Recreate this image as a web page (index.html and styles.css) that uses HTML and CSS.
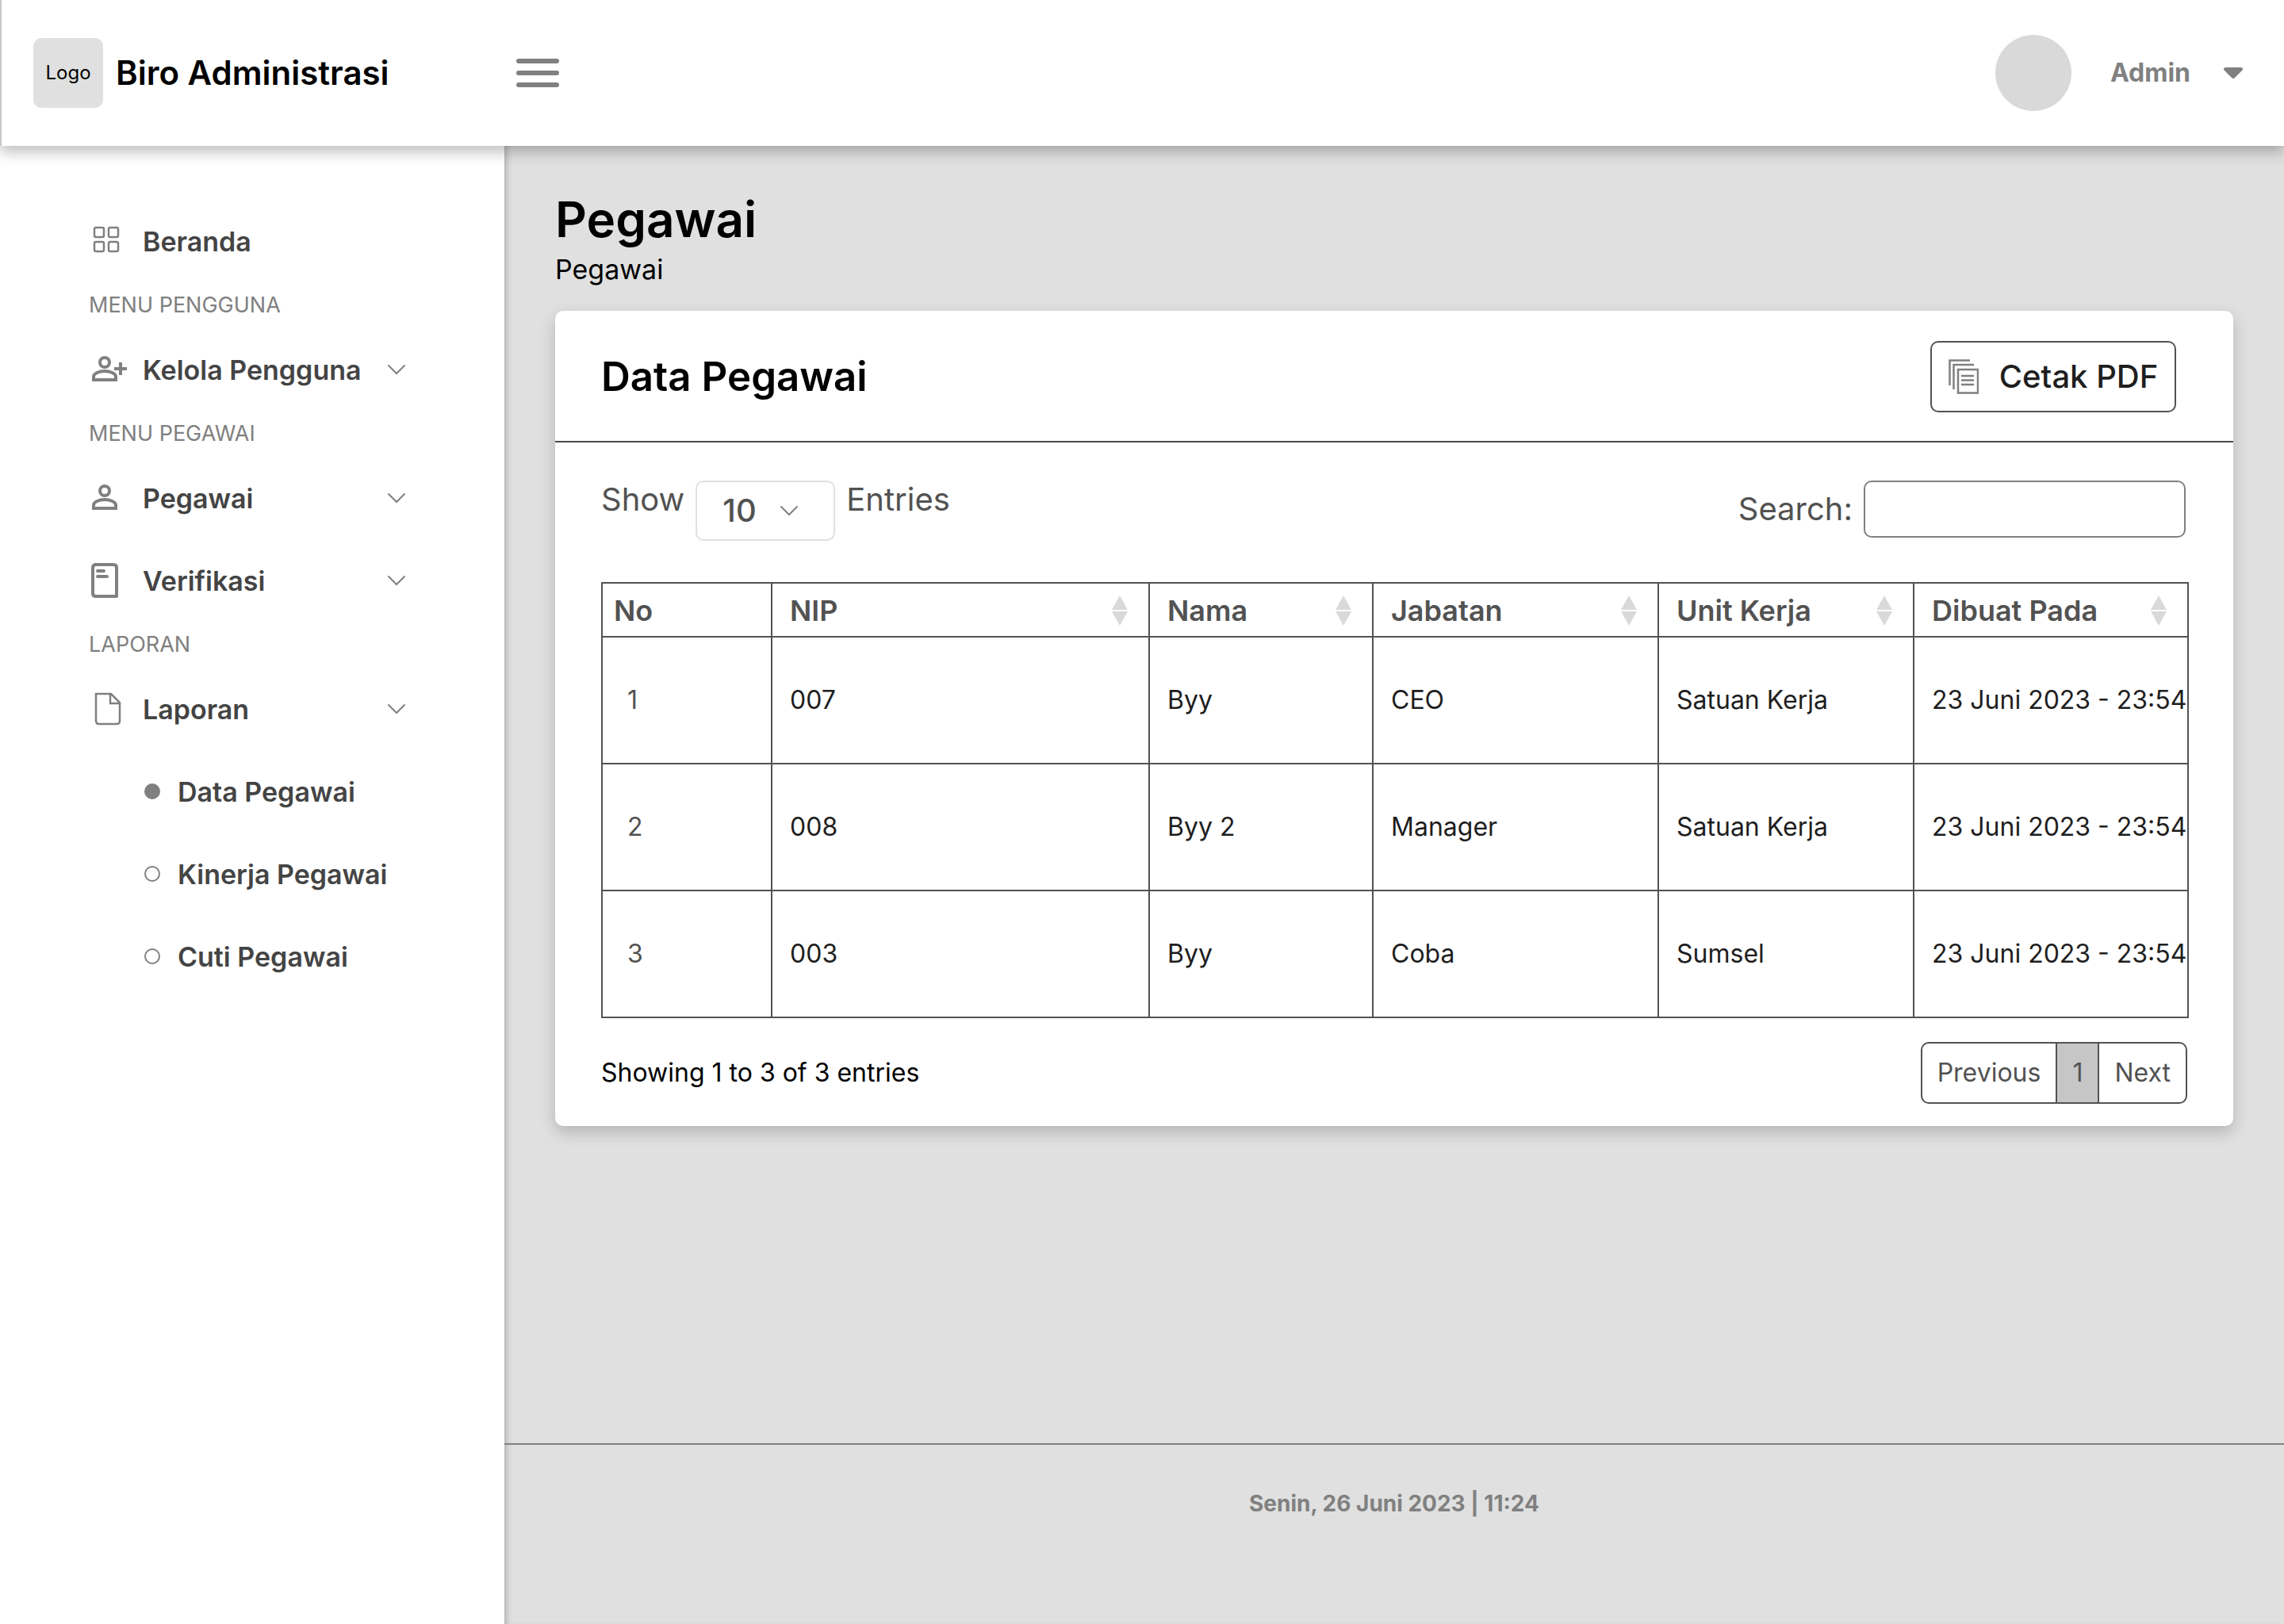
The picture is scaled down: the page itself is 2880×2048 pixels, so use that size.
FILE: index.html
```html
<!DOCTYPE html>
<html lang="id">
<head>
<meta charset="utf-8">
<meta name="viewport" content="width=device-width, initial-scale=1">
<title>Biro Administrasi - Data Pegawai</title>
<link rel="stylesheet" href="styles.css">
</head>
<body>
<svg class="defs" aria-hidden="true">
  <symbol id="chevron" viewBox="0 0 24 14"><path d="M2 2l10 10L22 2" fill="none" stroke="currentColor" stroke-width="2" stroke-linecap="round"/></symbol>
  <symbol id="sort" viewBox="0 0 20 38"><path d="M10 0l10 18H0zM0 20h20L10 38z" fill="currentColor"/></symbol>
</svg>

<header class="topbar">
  <a class="brand" href="#"><span class="brand-logo">Logo</span><span class="brand-name">Biro Administrasi</span></a>
  <button class="menu-toggle" type="button" aria-label="Menu">
    <svg width="54" height="36" viewBox="0 0 54 36"><path d="M3 3h48M3 18h48M3 33h48" stroke="currentColor" stroke-width="6" stroke-linecap="round"/></svg>
  </button>
  <button class="account" type="button">
    <span class="avatar"></span>
    <span class="account-name">Admin</span>
    <svg width="24" height="14" viewBox="0 0 24 14"><path d="M2 0h20q3 1 1.500 3.500L14 13q-2 2-4 0L.5 3.500Q-1 1 2 0z" fill="currentColor"/></svg>
  </button>
</header>

<div class="layout">
  <nav class="sidebar" aria-label="Menu utama">
    <a class="item" href="#">
      <svg class="item-icon" width="48" height="48" viewBox="0 0 48 48"><g fill="none" stroke="currentColor" stroke-width="2.500"><rect x="7" y="7" width="12" height="12" rx="2"/><rect x="25" y="7" width="12" height="12" rx="2"/><rect x="7" y="25" width="12" height="12" rx="2"/><rect x="25" y="25" width="12" height="12" rx="2"/></g></svg>
      <span class="item-label">Beranda</span>
    </a>
    <h2 class="group">MENU PENGGUNA</h2>
    <a class="item" href="#">
      <svg class="item-icon" width="48" height="48" viewBox="0 0 48 48"><g fill="none" stroke="currentColor" stroke-width="4"><circle cx="20" cy="15" r="6"/><path d="M6 37v-4c0-4 7-7 14-7s14 3 14 7v4z"/><path d="M32 23h16M40 15v16"/></g></svg>
      <span class="item-label">Kelola Pengguna</span>
      <svg class="item-chevron"><use href="#chevron"/></svg>
    </a>
    <h2 class="group">MENU PEGAWAI</h2>
    <a class="item" href="#">
      <svg class="item-icon" width="48" height="48" viewBox="0 0 48 48"><g fill="none" stroke="currentColor" stroke-width="4"><circle cx="20" cy="15" r="6"/><path d="M6 37v-4c0-4 7-7 14-7s14 3 14 7v4z"/></g></svg>
      <span class="item-label">Pegawai</span>
      <svg class="item-chevron"><use href="#chevron"/></svg>
    </a>
    <a class="item" href="#">
      <svg class="item-icon" width="48" height="48" viewBox="0 0 48 48"><g fill="none" stroke="currentColor" stroke-width="4"><path d="M7 4h24q4 0 4 4v36H9q-4 0-4-4V8q0-4 4-4" stroke-linejoin="round"/><path d="M11 12h8M11 19h12" stroke-linecap="round"/></g></svg>
      <span class="item-label">Verifikasi</span>
      <svg class="item-chevron"><use href="#chevron"/></svg>
    </a>
    <h2 class="group">LAPORAN</h2>
    <a class="item" href="#">
      <svg class="item-icon" width="48" height="48" viewBox="0 0 48 48"><path d="M9 5h19l11 11v23q0 4-4 4H13q-4 0-4-4zM27 5v12h12" fill="none" stroke="currentColor" stroke-width="2.500"/></svg>
      <span class="item-label">Laporan</span>
      <svg class="item-chevron"><use href="#chevron"/></svg>
    </a>
    <a class="item subitem" href="#" aria-current="page"><span class="dot dot-on"></span><span class="item-label">Data Pegawai</span></a>
    <a class="item subitem" href="#"><span class="dot"></span><span class="item-label">Kinerja Pegawai</span></a>
    <a class="item subitem" href="#"><span class="dot"></span><span class="item-label">Cuti Pegawai</span></a>
  </nav>

  <div class="page">
    <main class="content">
      <h1 class="page-title">Pegawai</h1>
      <p class="page-sub">Pegawai</p>

      <section class="card">
        <div class="card-head">
          <h2 class="card-title">Data Pegawai</h2>
          <button class="print" type="button">
            <svg width="38" height="44" viewBox="0 0 38 44"><g fill="none" stroke="currentColor" stroke-width="2.500"><path d="M1.500 33V1.500H27M6.500 38V7H32"/><path d="M12 13h25v29.500H12z"/><path d="M16 21h16M16 26.500h16M16 32h16"/></g></svg>
            <span>Cetak PDF</span>
          </button>
        </div>

        <div class="tools">
          <div class="length">
            <label for="length">Show</label>
            <span class="select">
              <select id="length"><option>10</option><option>25</option><option>50</option></select>
              <svg class="select-chevron"><use href="#chevron"/></svg>
            </span>
            <span>Entries</span>
          </div>
          <div class="search">
            <label for="search">Search:</label>
            <input id="search" type="text">
          </div>
        </div>

        <table class="table">
          <colgroup><col class="c-no"><col class="c-nip"><col class="c-nama"><col class="c-jabatan"><col class="c-unit"><col class="c-dibuat"></colgroup>
          <thead>
            <tr>
              <th scope="col">No</th>
              <th scope="col"><div class="th">NIP<svg class="sort"><use href="#sort"/></svg></div></th>
              <th scope="col"><div class="th">Nama<svg class="sort"><use href="#sort"/></svg></div></th>
              <th scope="col"><div class="th">Jabatan<svg class="sort"><use href="#sort"/></svg></div></th>
              <th scope="col"><div class="th">Unit Kerja<svg class="sort"><use href="#sort"/></svg></div></th>
              <th scope="col"><div class="th">Dibuat Pada<svg class="sort"><use href="#sort"/></svg></div></th>
            </tr>
          </thead>
          <tbody>
            <tr><td>1</td><td>007</td><td>Byy</td><td>CEO</td><td>Satuan Kerja</td><td>23 Juni 2023 - 23:54</td></tr>
            <tr><td>2</td><td>008</td><td>Byy 2</td><td>Manager</td><td>Satuan Kerja</td><td>23 Juni 2023 - 23:54</td></tr>
            <tr><td>3</td><td>003</td><td>Byy</td><td>Coba</td><td>Sumsel</td><td>23 Juni 2023 - 23:54</td></tr>
          </tbody>
        </table>

        <div class="card-foot">
          <p class="info">Showing 1 to 3 of 3 entries</p>
          <div class="pager">
            <button type="button">Previous</button>
            <button type="button" class="current" aria-current="page">1</button>
            <button type="button">Next</button>
          </div>
        </div>
      </section>
    </main>
    <footer class="footer">Senin, 26 Juni 2023 | 11:24</footer>
  </div>
</div>
</body>
</html>
```

FILE: styles.css
```css
* { box-sizing: border-box; }

body {
  margin: 0;
  min-height: 100vh;
  display: flex;
  flex-direction: column;
  background: #fff;
  color: #000;
  font-family: Inter, "Liberation Sans", sans-serif;
  font-size: 32px;
  line-height: 48px;
}

h1, h2, p { margin: 0; }
a { color: inherit; text-decoration: none; }
button, input, select { font: inherit; color: inherit; }
button { margin: 0; padding: 0; border: 0; background: none; }
svg { display: block; flex: none; }
.defs { position: absolute; width: 0; height: 0; }

/* top bar */
.topbar {
  position: relative;
  z-index: 1;
  display: flex;
  align-items: center;
  height: 184px;
  padding: 0 52px 0 40px;
  border-left: 2px solid #c8c8c8;
  background: #fff;
  box-shadow: 0 8px 16px rgba(0, 0, 0, .25);
}
.brand { display: flex; align-items: center; gap: 16px; width: 609px; }
.brand-logo {
  display: grid;
  place-items: center;
  width: 88px;
  height: 88px;
  border-radius: 10px;
  background: #e0e0e0;
  font-size: 24px;
}
.brand-name { font-size: 42px; font-weight: 600; }
.menu-toggle { color: #808080; }
.account { display: flex; align-items: center; margin-left: auto; color: #808080; }
.avatar { width: 96px; height: 96px; margin-right: 49px; border-radius: 50%; background: #d9d9d9; }
.account-name { margin-right: 42px; font-weight: 700; }

.layout { flex: 1; display: grid; grid-template-columns: 636px minmax(0, 1fr); }

/* sidebar */
.sidebar { padding: 68px 124px 68px 112px; color: #808080; }
.item { display: flex; align-items: center; height: 104px; }
.item-icon { margin-right: 20px; }
.item-label { padding-top: 2px; color: #444; font-size: 34px; font-weight: 600; }
.item-chevron { width: 24px; height: 14px; margin-left: auto; }
.group { font-size: 27px; line-height: 58px; font-weight: 400; }
.subitem { padding-left: 70px; }
.dot { width: 20px; height: 20px; margin-right: 22px; border: 2px solid #808080; border-radius: 50%; }
.dot-on { background: #808080; }

/* page */
.page {
  display: flex;
  flex-direction: column;
  background: #e0e0e0;
  box-shadow: inset 8px 0 8px -6px rgba(0, 0, 0, .25);
}
.content { flex: 1; padding: 54px 64px 64px; }
.page-title { font-size: 62px; line-height: 78px; font-weight: 600; }
.page-sub { margin-bottom: 28px; font-size: 34px; }

.card { border-radius: 10px; background: #fff; box-shadow: 0 8px 20px rgba(0, 0, 0, .2); }
.card-head {
  display: flex;
  align-items: center;
  justify-content: space-between;
  height: 166px;
  padding: 2px 72px 0 58px;
  border-bottom: 2px solid #4a4a4a;
}
.card-title { font-size: 51px; line-height: 60px; font-weight: 600; }
.print {
  display: flex;
  align-items: center;
  justify-content: center;
  gap: 26px;
  width: 310px;
  height: 90px;
  border: 2px solid #525252;
  border-radius: 10px;
  color: #808080;
  font-size: 40px;
  font-weight: 500;
}
.print span { color: #1e1e1e; }

.tools {
  display: flex;
  justify-content: space-between;
  padding: 48px 60px 52px 58px;
  color: #525252;
  font-size: 40px;
}
.length { display: flex; align-items: flex-start; gap: 14px; }
.select { display: grid; }
.select > * { grid-area: 1 / 1; }
.select select {
  appearance: none;
  width: 176px;
  height: 76px;
  padding: 0 32px;
  border: 2px solid #e0e0e0;
  border-radius: 10px;
  background: #fff;
  font-weight: 500;
}
.select-chevron { place-self: center end; width: 24px; height: 14px; margin-right: 46px; color: #808080; pointer-events: none; }
.search { display: flex; align-items: center; gap: 14px; height: 72px; }
.search input {
  width: 406px;
  height: 72px;
  padding: 0 16px;
  border: 2px solid #808080;
  border-radius: 10px;
  background: #fff;
}

.table {
  width: calc(100% - 114px);
  margin-left: 58px;
  table-layout: fixed;
  border-collapse: collapse;
  color: #1e1e1e;
}
.c-no { width: 10.7%; }
.c-nip { width: 23.8%; }
.c-nama { width: 14.1%; }
.c-jabatan { width: 18%; }
.c-unit { width: 16.1%; }
.table th, .table td { border: 2px solid #525252; text-align: left; white-space: nowrap; }
.table th { height: 68px; padding: 2px 26px 0 22px; color: #525252; font-size: 36px; font-weight: 600; }
.table td { height: 160px; padding: 0 0 0 22px; }
.table th:first-child { padding-left: 14px; }
.table td:first-child { padding-left: 31px; color: #525252; }
.th { display: flex; align-items: center; justify-content: space-between; }
.sort { width: 20px; height: 38px; color: #d9d9d9; }

.card-foot { display: flex; align-items: center; justify-content: space-between; padding: 30px 58px 28px; }
.pager {
  display: flex;
  height: 78px;
  border: 2px solid #525252;
  border-radius: 10px;
  overflow: hidden;
  color: #525252;
}
.pager button { padding: 0 19px; }
.pager .current { border: solid #525252; border-width: 0 2px; background: #c6c6c6; }

.footer {
  height: 228px;
  padding-top: 50px;
  border-top: 2px solid #808080;
  color: #808080;
  font-size: 28px;
  font-weight: 700;
  text-align: center;
}
```
